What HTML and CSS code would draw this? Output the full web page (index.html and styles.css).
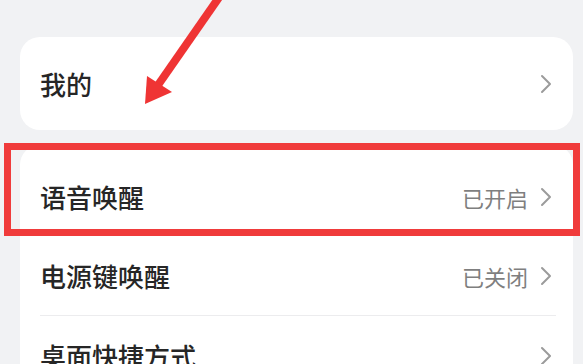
FILE: index.html
```html
<!DOCTYPE html>
<html lang="zh-CN">
<head>
<meta charset="utf-8">
<link rel="stylesheet" href="styles.css">
</head>
<body>
<div class="page">
  <div class="card card-top">
    <div class="row">
      <span class="label">我的</span>
      <span class="right">
        <svg class="chev" viewBox="0 0 12 20" width="12" height="20"><path d="M2 2 L10 10 L2 18" fill="none" stroke="#9b9b9b" stroke-width="2" stroke-linecap="round" stroke-linejoin="round"/></svg>
      </span>
    </div>
  </div>
  <div class="card card-list">
    <div class="row">
      <span class="label">语音唤醒</span>
      <span class="right"><span class="value">已开启</span>
        <svg class="chev" viewBox="0 0 12 20" width="12" height="20"><path d="M2 2 L10 10 L2 18" fill="none" stroke="#9b9b9b" stroke-width="2" stroke-linecap="round" stroke-linejoin="round"/></svg>
      </span>
    </div>
    <div class="row divided">
      <span class="label">电源键唤醒</span>
      <span class="right"><span class="value">已关闭</span>
        <svg class="chev" viewBox="0 0 12 20" width="12" height="20"><path d="M2 2 L10 10 L2 18" fill="none" stroke="#9b9b9b" stroke-width="2" stroke-linecap="round" stroke-linejoin="round"/></svg>
      </span>
    </div>
    <div class="row">
      <span class="label">桌面快捷方式</span>
      <span class="right">
        <svg class="chev" viewBox="0 0 12 20" width="12" height="20"><path d="M2 2 L10 10 L2 18" fill="none" stroke="#9b9b9b" stroke-width="2" stroke-linecap="round" stroke-linejoin="round"/></svg>
      </span>
    </div>
  </div>
  <div class="highlight"></div>
  <svg class="arrow" viewBox="0 0 583 364" width="583" height="364">
    <line x1="220" y1="-4" x2="156" y2="88" stroke="#ef3434" stroke-width="8"/>
    <polygon points="145,104 147,76 172,92" fill="#ef3434"/>
  </svg>
</div>
</body>
</html>
```
FILE: styles.css
```css
html, body {
  margin: 0;
  padding: 0;
  background: #f1f2f4;
}
body {
  width: 583px;
  height: 364px;
  overflow: hidden;
  font-family: "Noto Sans CJK SC", "Noto Sans", sans-serif;
}
.page {
  position: relative;
  height: 364px;
  box-sizing: border-box;
  overflow: hidden;
  padding: 37px 10px 0 20px;
}
.card {
  background: #ffffff;
  border-radius: 20px;
}
.card-top {
  height: 93px;
  display: flex;
  flex-direction: column;
  justify-content: center;
}
.card-list {
  margin-top: 15px;
  padding-top: 12px;
}
.row {
  display: flex;
  align-items: center;
  justify-content: space-between;
  height: 79px;
  margin: 0 17px 0 20px;
  box-sizing: border-box;
}
.card-top .row {
  height: 93px;
}
.divided {
  border-bottom: 1px solid #ececee;
  height: 80px;
}
.label {
  font-size: 26px;
  font-weight: 500;
  color: #262626;
  line-height: 1;
}
.right {
  display: flex;
  align-items: center;
  gap: 12px;
  padding-right: 4px;
}
.value {
  font-size: 22px;
  color: #7f7f7f;
  line-height: 1;
}
.chev {
  display: block;
}
.highlight {
  position: absolute;
  left: 4px;
  top: 143px;
  width: 576px;
  height: 93px;
  box-sizing: border-box;
  border: 7px solid #f03b3b;
}
.arrow {
  position: absolute;
  left: 0;
  top: 0;
}
```
